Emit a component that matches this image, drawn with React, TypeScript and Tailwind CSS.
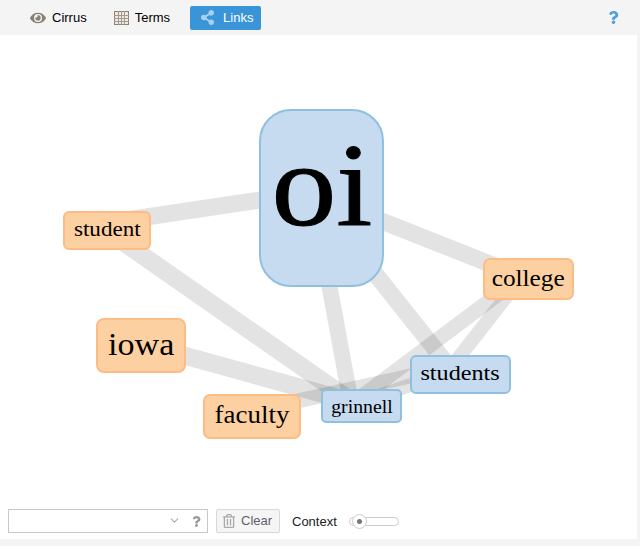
import { ChevronDown } from "lucide-react";
import { FaEye, FaShareAlt, FaQuestion, FaRegTrashAlt } from "react-icons/fa";

const edges = [
  { x1: 106, y1: 223, x2: 321, y2: 191, w: 17 },
  { x1: 321, y1: 197, x2: 528, y2: 279, w: 17 },
  { x1: 313, y1: 197, x2: 351.5, y2: 406, w: 16 },
  { x1: 314, y1: 197, x2: 455, y2: 374, w: 17 },
  { x1: 106, y1: 230, x2: 361, y2: 408, w: 18 },
  { x1: 141, y1: 343.6, x2: 361, y2: 404.5, w: 18 },
  { x1: 252, y1: 411, x2: 460, y2: 365, w: 15 },
  { x1: 361, y1: 397, x2: 528, y2: 272, w: 15 },
  { x1: 361, y1: 402, x2: 460, y2: 368, w: 14 },
  { x1: 446, y1: 374, x2: 520, y2: 279, w: 14 },
];

const blue = "bg-[#c6dbef] border-[#8fc0e0]";
const orange = "bg-[#fdd0a2] border-[#fdbb85]";

function Node({ text, cls, textCls }: { text: string; cls: string; textCls: string }) {
  return (
    <div className={`absolute flex items-center justify-center border-2 font-['Liberation_Serif',serif] text-black leading-none ${cls}`}>
      <span className={`block scale-x-[1.1] ${textCls}`}>{text}</span>
    </div>
  );
}

function TableIcon() {
  return (
    <svg width="15" height="14" viewBox="0 0 15 14" className="shrink-0">
      <rect x="0.5" y="0.5" width="14" height="13" fill="#efe9e2" stroke="#8a8078" />
      <path d="M0 4.5H15M0 7.5H15M0 10.5H15M4.5 0V14M7.5 0V14M10.5 0V14" stroke="#a39a90" strokeWidth="1" />
    </svg>
  );
}

export default function App() {
  return (
    <div className="w-[640px] h-[546px] bg-[#f4f4f4] flex flex-col font-['Liberation_Sans',sans-serif] text-[13px] overflow-hidden">
      <div className="h-[35px] shrink-0 flex items-center pl-[30px] pr-[20px] text-black">
        <div className="flex items-center gap-[6px]">
          <FaEye size={16} className="text-[#8a8078]" />
          <span>Cirrus</span>
        </div>
        <div className="flex items-center gap-[6px] ml-[27px]">
          <TableIcon />
          <span>Terms</span>
        </div>
        <div className="flex items-center gap-[8px] ml-[20px] bg-[#3a94d8] text-white rounded-[2px] h-[24px] pl-[10px] w-[71px]">
          <FaShareAlt size={15} className="text-[#a8d0f0]" />
          <span>Links</span>
        </div>
        <FaQuestion size={13} className="ml-auto text-[#4a9fe0]" />
      </div>

      <div className="w-[637px] h-[504px] bg-white flex flex-col">
        <div className="relative flex-1">
          <svg className="absolute left-0 top-[-35px]" width="637" height="546">
            {edges.map((e, i) => (
              <line
                key={i}
                x1={e.x1}
                y1={e.y1}
                x2={e.x2}
                y2={e.y2}
                stroke="#000"
                strokeOpacity="0.11"
                strokeWidth={e.w}
              />
            ))}
          </svg>
          <Node text="oi" cls={`${blue} left-[259px] top-[74px] w-[125px] h-[178px] rounded-[32px]`} textCls="text-[118px] mb-[25px] [-webkit-text-stroke:1px_black]" />
          <Node text="student" cls={`${orange} left-[63px] top-[176px] w-[88px] h-[39px] rounded-[6px]`} textCls="text-[21px] mb-[3px]" />
          <Node text="college" cls={`${orange} left-[483px] top-[223px] w-[91px] h-[42px] rounded-[7px]`} textCls="text-[23px] mb-[2px]" />
          <Node text="iowa" cls={`${orange} left-[96px] top-[283px] w-[90px] h-[55px] rounded-[8px]`} textCls="text-[31px] mb-[3px]" />
          <Node text="faculty" cls={`${orange} left-[203px] top-[359px] w-[98px] h-[45px] rounded-[7px]`} textCls="text-[24.5px] mb-[3px]" />
          <Node text="grinnell" cls={`${blue} left-[321px] top-[354px] w-[81px] h-[34px] rounded-[5px]`} textCls="text-[18px] mt-[1px]" />
          <Node text="students" cls={`${blue} left-[410px] top-[320px] w-[101px] h-[39px] rounded-[6px]`} textCls="text-[22px] mb-[3px]" />
        </div>

        <div className="h-[39px] shrink-0 flex items-center pl-[8px] pt-[3px]">
          <div className="w-[200px] h-[24px] border border-[#c8c8c8] flex items-center justify-end pr-[5px] gap-[10px]">
            <ChevronDown size={13} className="text-[#aaa] mb-[2px]" />
            <FaQuestion size={11} className="text-[#999]" />
          </div>
          <div className="ml-[8px] w-[64px] h-[24px] border border-[#d8d8d8] rounded-[2px] bg-[#f5f5f5] flex items-center pl-[5px] gap-[5px] text-[#5f5f6a]">
            <FaRegTrashAlt size={14} className="text-[#aaa]" />
            <span>Clear</span>
          </div>
          <span className="ml-[12px] text-[#222] mt-[1px]">Context</span>
          <div className="relative ml-[12px] w-[50px] h-[9px] border border-[#ccc] rounded-full">
            <div className="absolute left-[2px] top-[-4px] w-[15px] h-[15px] rounded-full border border-[#ccc] bg-white flex items-center justify-center">
              <div className="w-[5px] h-[5px] rounded-full bg-[#777]" />
            </div>
          </div>
        </div>
      </div>
    </div>
  );
}
